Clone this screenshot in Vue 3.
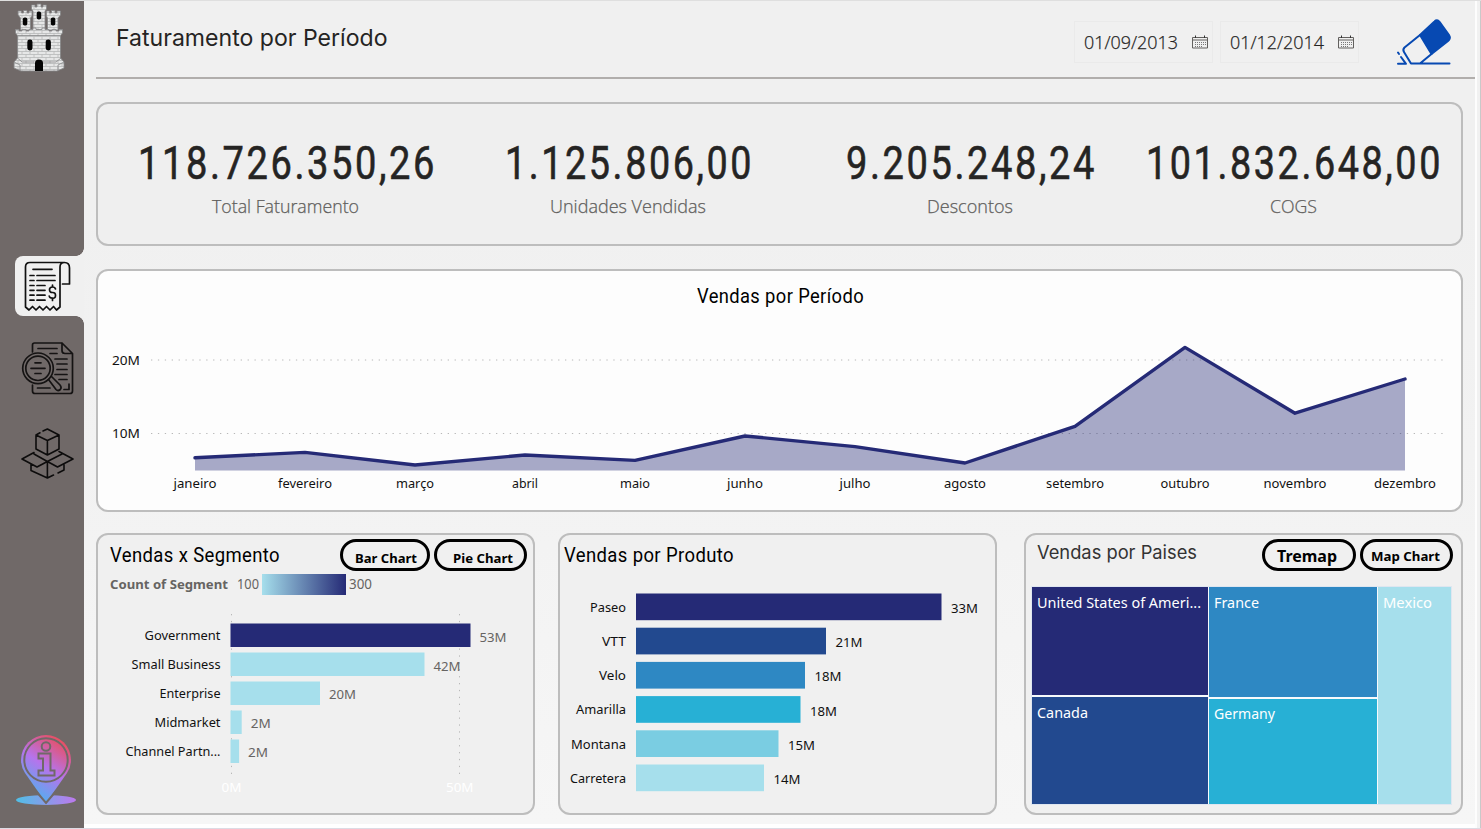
<script setup>
import { h } from 'vue'

// Single line of text fitted to a fixed advance width.
const Fit = (p) =>
  h('svg', { width: p.w, height: Math.ceil(p.s * 1.3) }, [
    h('text', { x: 0, y: p.s, 'font-size': p.s, textLength: p.w, lengthAdjust: 'spacingAndGlyphs', fill: 'currentColor' }, p.t),
  ])
Fit.props = ['t', 'w', 's']

const kpis = [
  { value: '118.726.350,26', w: 299, label: 'Total Faturamento', lw: 147 },
  { value: '1.125.806,00', w: 249, label: 'Unidades Vendidas', lw: 156 },
  { value: '9.205.248,24', w: 251, label: 'Descontos', lw: 86 },
  { value: '101.832.648,00', w: 297, label: 'COGS', lw: 47 },
]
const months = [
  ['janeiro', 457.8, 43], ['fevereiro', 452.4, 54], ['março', 465, 38], ['abril', 455, 26],
  ['maio', 460.4, 30], ['junho', 436, 36], ['julho', 446.6, 31], ['agosto', 463, 42],
  ['setembro', 426.4, 58], ['outubro', 347.4, 49], ['novembro', 413.2, 63], ['dezembro', 379, 62],
].map(([name, y, w], i) => ({ name, y, w, x: 195 + i * 110 }))
const line = months.map((m) => `${m.x},${m.y}`).join(' ')
const area = `195,470.5 ${line} 1405,470.5`

const segments = [
  { n: 'Government', nw: 76, v: '53M', w: 240, c: '#252a76', vw: 27 },
  { n: 'Small Business', nw: 89, v: '42M', w: 194, c: '#a6dfec', vw: 27 },
  { n: 'Enterprise', nw: 61, v: '20M', w: 89.5, c: '#a6dfec', vw: 27 },
  { n: 'Midmarket', nw: 66, v: '2M', w: 11.2, c: '#a6dfec', vw: 20 },
  { n: 'Channel Partn...', nw: 95, v: '2M', w: 8.6, c: '#a6dfec', vw: 20 },
]
const products = [
  { n: 'Paseo', nw: 36, v: '33M', w: 305.5, c: '#252a76' },
  { n: 'VTT', nw: 24, v: '21M', w: 190, c: '#22498f' },
  { n: 'Velo', nw: 27, v: '18M', w: 169, c: '#2e88c3' },
  { n: 'Amarilla', nw: 50, v: '18M', w: 164.5, c: '#27b0d5' },
  { n: 'Montana', nw: 55, v: '15M', w: 142.5, c: '#7acde2' },
  { n: 'Carretera', nw: 56, v: '14M', w: 128, c: '#a6dfec' },
]
const treemap = [
  { cls: 'c1', cells: [{ n: 'United States of Ameri...', w: 164, cls: 'us' }, { n: 'Canada', w: 51, cls: 'ca' }] },
  { cls: 'c2', cells: [{ n: 'France', w: 45, cls: 'fr' }, { n: 'Germany', w: 61, cls: 'de' }] },
  { cls: 'c3', cells: [{ n: 'Mexico', w: 49, cls: 'mx' }] },
]
const dates = ['01/09/2013', '01/12/2014']
</script>

<template>
  <div class="page">
    <aside class="side">
      <svg class="castle" width="56" height="72" viewBox="11 2 56 72">
        <defs>
          <pattern id="brick" width="8" height="6" patternUnits="userSpaceOnUse">
            <rect width="8" height="6" fill="#e6e7e7" />
            <path d="M0 .5H8M0 3.5H8M2 .5V3.5M6 3.5V6.5" stroke="#b0b1b2" stroke-width=".7" />
          </pattern>
        </defs>
        <g fill="url(#brick)" stroke="#858788" stroke-width=".8" stroke-linejoin="round">
          <path d="M33 30V11L31.500 9V5H35V7H37V4H41V7H43V5H46.500V9L45 11V30Z" />
          <path d="M20.500 30V18L18 15V11H21.500V13H23.500V10.500H27V13H29V11H32V16L30.500 18V30Z" />
          <path d="M47.500 30V18L46.500 16V11H49.500V13H51.500V10.500H55V13H57V11H60.500V15L58 18V30Z" />
          <path d="M17.500 34H60.500V58L64 62V68L57 71H21L14 68V62L17.500 58Z" />
          <path d="M15.500 29.500H19V31H22V29.500H26V31H29V29.500H33V28H36V29.500H42V28H45V29.500H49V31H52V29.500H56V31H59V29.500H62.500V33L60.500 35.500H17.500L15.500 33Z" />
          <path d="M17.500 58L22 62H34M61 58L56 62H43M14 62L20 65V71M64 62L58 65V71" fill="none" />
        </g>
        <g fill="#050505">
          <rect x="36.700" y="11.500" width="4.500" height="8" rx="2" />
          <rect x="22.800" y="17.500" width="4.500" height="8" rx="1.800" />
          <rect x="50.800" y="17.500" width="4.500" height="8" rx="1.800" />
          <rect x="27.300" y="39.500" width="5.200" height="11" rx="2.400" />
          <rect x="45.700" y="39.500" width="5.200" height="11" rx="2.400" />
          <path d="M35 71V63Q35 59.500 39 59.500T43 63V71Z" />
        </g>
      </svg>
      <div class="tab">
        <svg width="50" height="54" viewBox="22 259 50 54" fill="none" stroke="#111" stroke-width="1.700" stroke-linecap="round" stroke-linejoin="round">
          <path d="M60 307V267Q60 262.500 64.500 262.500H30Q25.500 262.500 25.500 267V307L29 310L32.500 306.500L36 310L39.500 306.500L43 310L46.500 306.500L50 310L53.500 306.500L56.500 310L60 307M64.500 262.500Q69.500 262.500 69.500 268V284H62.500" />
          <path d="M33 269.300H52M30 275.500H34M37 275.500H55M30 280.500H34M37 280.500H55M30 285.500H34M37 285.500H45M30 290.300H34M37 290.300H45M30 295.200H34M37 295.200H45M30 300.200H34M37 300.200H45" />
          <path d="M55.500 289Q55 287 52.500 287Q49.500 287 49.500 289.800T52.500 292.500T55.500 295.500T52.500 298.200Q49.500 298.200 49.200 296M52.500 285V287M52.500 298.200V300.500" />
        </svg>
      </div>
      <svg class="doc" width="56" height="56" viewBox="20 341 56 56" fill="none" stroke="#151313" stroke-width="1.700" stroke-linecap="round" stroke-linejoin="round">
        <path d="M32.500 352V345Q32.500 343 34.500 343H62L72.500 353.500V391Q72.500 393.500 70 393.500H35Q32.500 393.500 32.500 391V385M62 343V350.500Q62 353.500 65 353.500H72.500Z" />
        <path d="M38 348.500H57M50 353.500H57M55 359H67M57 364H67M57 369.500H67M55 374.500H67M59 379.500H67M69 384V389.500H64M37.500 388H50" />
        <circle cx="38" cy="368.300" r="15.300" /><circle cx="38" cy="368.300" r="12.200" />
        <path d="M48.500 379.500L56 389.500Q58 391.500 60.300 389.500Q62 387.500 60 385L51.500 376.500M35 362.800H41M31 368.300H45M35 373.500H41" />
      </svg>
      <svg class="box" width="56" height="54" viewBox="19 427 56 54" fill="none" stroke="#0d0c0c" stroke-width="1.600" stroke-linecap="round" stroke-linejoin="round">
        <path d="M43 431L47.400 429L59 435V449L47.400 455L36 449V435L40 432.800M36 435L47.400 440.500L59 435M47.400 440.500V455" />
        <path d="M34 452.500L22 459L37 467L47.400 461.500L34 454M59 451.500L73 459L57.500 467L47.400 461.500L62 454M31 464.500V470.500L47.400 478L53.500 475M58 473L64 470V464.500M47.400 461.500V478" />
      </svg>
      <svg class="pin" width="64" height="74" viewBox="14 733 64 74">
        <defs>
          <linearGradient id="pinFill" gradientUnits="userSpaceOnUse" x1="28" y1="797" x2="68" y2="740">
            <stop offset="0" stop-color="#45b7ef" /><stop offset=".5" stop-color="#b574ec" /><stop offset="1" stop-color="#ef4a50" />
          </linearGradient>
          <linearGradient id="base"><stop offset="0" stop-color="#50bfe6" /><stop offset="1" stop-color="#bd79ed" /></linearGradient>
        </defs>
        <ellipse cx="46" cy="800" rx="30" ry="5" fill="url(#base)" />
        <path d="M46 803L25 773Q21 767 21 760A25 25 0 0 1 71 760Q71 767 67 773Z" fill="url(#pinFill)" />
        <g fill="none" stroke="#706968" stroke-width="2">
          <path d="M35 790L46 803L57 790" />
          <circle cx="46" cy="760" r="21.700" /><circle cx="46" cy="746.500" r="4.300" />
          <path d="M38.500 753.500H50.500V770.500H54.500V775.500H38.500V770.500H43V758.500H38.500Z" />
        </g>
      </svg>
    </aside>

    <main class="main">
      <header class="head">
        <Fit class="inter title" t="Faturamento por Período" :w="271.5" :s="23" />
        <div class="dates">
          <div v-for="d in dates" :key="d" class="date">
            <Fit class="open" :t="d" :w="94" :s="18" />
            <svg width="16" height="14" viewBox="0 0 16 14" fill="none" stroke="#62605e">
              <path d="M.5 2.500H15.500V13H.5ZM.5 5H15.500" />
              <path d="M3.500 .5V3M12.500 .5V3" stroke="#333" />
              <path d="M3 7.500H14M3 9.500H14M3 11.500H11" stroke-dasharray="1 1" stroke="#777" />
            </svg>
          </div>
        </div>
        <svg class="eraser" width="58" height="52" viewBox="1395 16 58 52" fill="none" stroke="#0749b2" stroke-width="2" stroke-linecap="round" stroke-linejoin="round">
          <path d="M1420 34L1434.500 20.500Q1437 18 1439.500 20.800L1449 34Q1451 37.500 1448 40L1431.500 53Z" fill="#0749b2" />
          <path d="M1420 34L1404.500 46.500Q1402.500 48.500 1404 51L1411 62.500H1449.500M1431.500 53L1420 62.500M1398 51.500L1399 53M1401 56L1406 62.800H1398" />
        </svg>
      </header>

      <section class="card kpis">
        <div v-for="k in kpis" :key="k.label" class="kpi">
          <Fit class="din num" :t="k.value" :w="k.w" :s="47" />
          <Fit class="open lab" :t="k.label" :w="k.lw" :s="17.8" />
        </div>
      </section>

      <section class="card trend">
        <svg class="small" width="1363" height="239" viewBox="98 271 1363 239">
          <text class="din" x="697" y="303" font-size="19.500" textLength="167" lengthAdjust="spacingAndGlyphs">Vendas por Período</text>
          <path d="M151 360H1446M151 433.500H1446" stroke="#b8b8b8" stroke-width="1" stroke-dasharray="1.300 5.600" />
          <text x="112" y="365" textLength="28" lengthAdjust="spacingAndGlyphs">20M</text>
          <text x="112" y="438" textLength="28" lengthAdjust="spacingAndGlyphs">10M</text>
          <polygon :points="area" fill="#252a76" fill-opacity=".4" />
          <polyline :points="line" fill="none" stroke="#252a76" stroke-width="3.400" stroke-linejoin="round" stroke-linecap="round" />
          <text v-for="m in months" :key="m.name" :x="m.x - m.w / 2" y="488" :textLength="m.w" lengthAdjust="spacingAndGlyphs">{{ m.name }}</text>
        </svg>
      </section>

      <div class="row">
        <section class="card">
          <div class="bar">
            <Fit class="din t1" t="Vendas x Segmento" :w="170" :s="19.5" />
            <button class="pill b1"><Fit class="noto" t="Bar Chart" :w="62" :s="13" /></button>
            <button class="pill b2"><Fit class="noto" t="Pie Chart" :w="60" :s="13" /></button>
          </div>
          <svg class="small grey" width="435" height="242" viewBox="98 571 435 242">
            <defs><linearGradient id="scale"><stop offset="0" stop-color="#a6dfec" /><stop offset="1" stop-color="#252a76" /></linearGradient></defs>
            <text x="110" y="589" font-weight="700" textLength="118" lengthAdjust="spacingAndGlyphs">Count of Segment</text>
            <text x="237" y="589" font-size="13.500" textLength="22" lengthAdjust="spacingAndGlyphs">100</text>
            <rect x="262" y="574" width="84" height="21" fill="url(#scale)" />
            <text x="349" y="589" font-size="13.500" textLength="23" lengthAdjust="spacingAndGlyphs">300</text>
            <path d="M231.500 614V776M459.500 614V776" stroke="#b8b8b8" stroke-dasharray="1.300 5.600" />
            <g v-for="(s, i) in segments" :key="s.n">
              <rect x="230.500" :y="623.500 + i * 29" :width="s.w" height="23.500" :fill="s.c" />
              <text class="ink" :x="220.500 - s.nw" :y="640 + i * 29" :textLength="s.nw" lengthAdjust="spacingAndGlyphs">{{ s.n }}</text>
              <text :x="239.500 + s.w" :y="642 + i * 28.700" :textLength="s.vw" lengthAdjust="spacingAndGlyphs">{{ s.v }}</text>
            </g>
            <g fill="#fff">
              <text x="221.500" y="792" textLength="20" lengthAdjust="spacingAndGlyphs">0M</text>
              <text x="446" y="792" textLength="27.500" lengthAdjust="spacingAndGlyphs">50M</text>
            </g>
          </svg>
        </section>

        <section class="card">
          <div class="bar"><Fit class="din t2" t="Vendas por Produto" :w="170" :s="19.5" /></div>
          <svg class="small" width="435" height="242" viewBox="560 571 435 242">
            <g v-for="(p, i) in products" :key="p.n">
              <rect x="636" :y="593.500 + i * 34.200" :width="p.w" height="26.700" :fill="p.c" />
              <text :x="626 - p.nw" :y="612 + i * 34.150" :textLength="p.nw" lengthAdjust="spacingAndGlyphs">{{ p.n }}</text>
              <text :x="645.500 + p.w" :y="613 + i * 34.200" textLength="27" lengthAdjust="spacingAndGlyphs">{{ p.v }}</text>
            </g>
          </svg>
        </section>

        <section class="card">
          <div class="bar">
            <Fit class="inter t3" t="Vendas por Paises" :w="160" :s="18.5" />
            <button class="pill b3"><Fit class="noto" t="Tremap" :w="60" :s="16.5" /></button>
            <button class="pill b4"><Fit class="noto" t="Map Chart" :w="69" :s="13" /></button>
          </div>
          <div class="tree">
            <div v-for="c in treemap" :key="c.cls" class="col" :class="c.cls">
              <div v-for="t in c.cells" :key="t.n" class="cell" :class="t.cls"><Fit class="noto" :t="t.n" :w="t.w" :s="14.3" /></div>
            </div>
          </div>
        </section>
      </div>
    </main>
    <div class="edge"></div>
  </div>
</template>

<style>
body { background: #fff; overflow: hidden; }
</style>

<style scoped>
.page { display: flex; width: 1481px; height: 829px; box-sizing: border-box; border-top: 1px solid #dfdfdf; border-bottom: 1px solid #dcdbe4; background: #fff; overflow: hidden; }
svg { display: block; flex: none; overflow: visible; }
.side { width: 84px; height: 827px; flex: none; background: #706968; display: flex; flex-direction: column; }
.castle { margin: 1px 0 0 11px; }
.tab { position: relative; width: 69px; height: 60px; margin: 182px 0 0 15px; background: #f0f0f0; border-radius: 8px 0 0 8px; box-sizing: border-box; padding: 3px 0 0 7px; }
.tab::before, .tab::after { content: ''; position: absolute; right: 0; width: 8px; height: 8px; }
.tab::before { top: -8px; background: radial-gradient(circle at 0 0, transparent 7.5px, #f0f0f0 8px); }
.tab::after { bottom: -8px; background: radial-gradient(circle at 0 100%, transparent 7.5px, #f0f0f0 8px); }
.doc { margin: 25px 0 0 20px; }
.box { margin: 30px 0 0 19px; }
.pin { margin: 252px 0 0 14px; }
.main { width: 1391px; height: 823px; flex: none; background: linear-gradient(#f0f0f0 0, #f0f0f0 25%, #f2f2f2 55%, #f6f6f6 100%); box-sizing: border-box; padding-left: 12px; }
.edge { width: 6px; height: 827px; box-sizing: border-box; margin-left: auto; background: #f1f1f1; border-left: 2px solid #fdfdfd; border-right: 1px solid #c9c9c9; }
.inter { font-family: Inter, sans-serif; }
.din { font-family: Roboto, sans-serif; letter-spacing: .4px; }
.open { font-family: "Open Sans", sans-serif; }
.noto { font-family: "Noto Sans", sans-serif; }
.head { display: flex; align-items: flex-start; height: 78px; box-sizing: border-box; border-bottom: 2px solid #b1aeac; }
.title { margin: 22px 0 0 20px; color: #252423; }
.dates { display: flex; gap: 7px; margin: 20px 0 0 686.5px; }
.date { display: flex; width: 139px; height: 42px; box-sizing: border-box; border: 1px solid #eaeaea; color: #252423; font-weight: 300; stroke: #252423; stroke-width: .25px; }
.date > :first-child { margin: 9px 0 0 9px; }
.date > :last-child { margin: 13px 0 0 14px; stroke-width: 1px; }
.eraser { margin: 16px 0 0 36px; }
.card { box-sizing: border-box; border: 2px solid #bdbdbd; border-radius: 12px; background: #f0f0f0; }
.kpis { display: grid; grid-template-columns: 376px 308px 374px 273px; width: 1367px; height: 144px; margin-top: 23px; background: #efefef; }
.kpis { grid-template-columns: 343px 374px 310px 336px; }
.kpi { display: flex; flex-direction: column; align-items: center; min-width: 0; }
.kpi:first-child { padding-left: 32px; }
.num { height: 56px; margin: 28px -3px 0 0; color: #252423; letter-spacing: 3.2px; stroke: #252423; stroke-width: .6px; }
.lab { margin-top: 7px; color: #605e5c; font-weight: 300; stroke: #605e5c; stroke-width: .25px; }
.trend { width: 1367px; height: 243px; margin-top: 23px; background: #fdfdfd; }
.small { font-family: "Noto Sans", sans-serif; font-size: 13px; fill: #111; }
.small .din { font-family: Roboto, sans-serif; fill: #000; }
.grey { fill: #666462; }
.grey .ink { fill: #111; }
.row { display: grid; grid-template-columns: 439px 439px 439px; column-gap: 23px; margin-top: 21px; width: 1367px; }
.row .card { height: 282px; }
.row .card:last-child { margin-left: 4px; width: 439px; }
.bar { display: flex; height: 36px; align-items: flex-start; color: #000; }
.t1 { margin: 7px 60px 0 12px; }
.t2 { margin: 7px 0 0 4px; }
.t3 { margin: 5px 65px 0 11px; color: #333; }
.pill { display: flex; align-items: flex-start; flex: none; box-sizing: border-box; height: 32px; margin: 4px 0 0; padding: 0; border: 3px solid #000; border-radius: 16px; background: #f0f0f0; color: #000; font-weight: 700; }
.b1 { width: 90px; padding: 8px 0 0 12px; }
.b2 { width: 93px; margin-left: 4px; padding: 8px 0 0 16px; }
.b3 { width: 94px; padding: 3px 0 0 12px; }
.b4 { width: 93px; margin-left: 4px; padding: 6px 0 0 8px; }
.tree { display: flex; gap: 1px; width: 421px; height: 219px; margin: 15px 0 0 5px; background: #f7fafc; border: 1px solid #dfe6f0; box-sizing: border-box; }
.col { display: flex; flex-direction: column; gap: 2px; }
.c1 { width: 176px; }
.c2 { width: 168px; }
.c3 { flex: 1; }
.cell { color: #fff; padding: 7px 0 0 5px; box-sizing: border-box; flex: 1; }
.us { flex: 0 0 108px; background: #252a76; }
.ca { background: #22498f; }
.fr { flex: 0 0 110px; background: #2e88c3; }
.de { padding-top: 6px; background: #27b0d5; }
.mx { background: #a6dfec; }
</style>
